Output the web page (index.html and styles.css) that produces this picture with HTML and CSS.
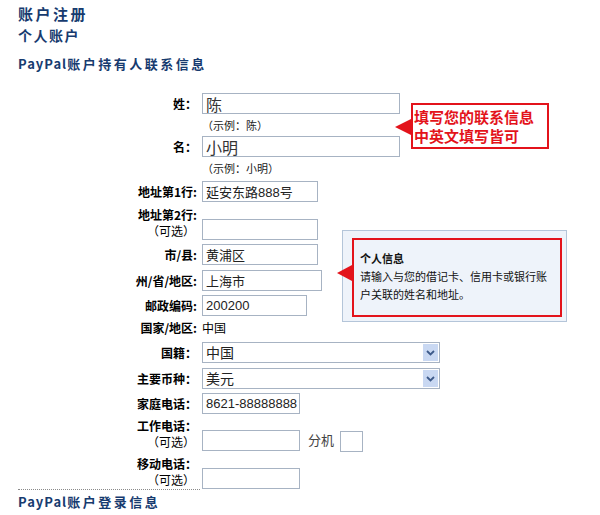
FILE: index.html
```html
<!DOCTYPE html>
<html lang="zh-CN">
<head>
<meta charset="utf-8">
<title>账户注册</title>
<link rel="stylesheet" href="styles.css">
</head>
<body>
<div class="page">
  <div class="head">
    <h1 class="title">账户注册</h1>
    <h2 class="subtitle">个人账户</h2>
    <h3 class="section"><span class="latin">PayPal</span>账户持有人联系信息</h3>
  </div>

  <div class="form">
    <div class="row">
      <div class="lbl">姓：</div>
      <div class="field">
        <input class="inp w-name big" value="陈">
        <div class="hint">（示例：陈）</div>
      </div>
    </div>
    <div class="row mt2">
      <div class="lbl">名：</div>
      <div class="field">
        <input class="inp w-name big" value="小明">
        <div class="hint hint2">（示例：小明）</div>
      </div>
    </div>
    <div class="row mt4">
      <div class="lbl">地址第1行:</div>
      <div class="field"><input class="inp w-addr" value="延安东路888号"></div>
    </div>
    <div class="row mt5">
      <div class="lbl two"><span class="l1">地址第2行:</span><span class="opt">（可选）</span></div>
      <div class="field low"><input class="inp w-addr" value=""></div>
    </div>
    <div class="row mt4">
      <div class="lbl">市/县:</div>
      <div class="field"><input class="inp w-addr" value="黄浦区"></div>
    </div>
    <div class="row mt5">
      <div class="lbl">州/省/地区:</div>
      <div class="field"><input class="inp w-state" value="上海市"></div>
    </div>
    <div class="row mt4">
      <div class="lbl">邮政编码:</div>
      <div class="field"><input class="inp w-zip" value="200200"></div>
    </div>
    <div class="row mt4 country">
      <div class="lbl">国家/地区:</div>
      <div class="field"><div class="static">中国</div></div>
    </div>
    <div class="row mt6">
      <div class="lbl">国籍：</div>
      <div class="field">
        <div class="select">
          <select class="sel"><option>中国</option></select>
          <span class="sel-btn"><svg width="9" height="6" viewBox="0 0 9 6"><path d="M1 1 L4.5 4.5 L8 1" fill="none" stroke="#3d5a8a" stroke-width="1.8"/></svg></span>
        </div>
      </div>
    </div>
    <div class="row mt5">
      <div class="lbl">主要币种：</div>
      <div class="field">
        <div class="select">
          <select class="sel"><option>美元</option></select>
          <span class="sel-btn"><svg width="9" height="6" viewBox="0 0 9 6"><path d="M1 1 L4.5 4.5 L8 1" fill="none" stroke="#3d5a8a" stroke-width="1.8"/></svg></span>
        </div>
      </div>
    </div>
    <div class="row mt4">
      <div class="lbl">家庭电话：</div>
      <div class="field"><div class="inp w-phone caretbox">8621-88888888<span class="caret"></span></div></div>
    </div>
    <div class="row mt4">
      <div class="lbl two"><span class="l1">工作电话：</span><span class="opt">（可选）</span></div>
      <div class="field low inline">
        <input class="inp w-phone" value="">
        <span class="ext">分机</span>
        <input class="inp w-ext" value="">
      </div>
    </div>
    <div class="row mt4">
      <div class="lbl two"><span class="l1">移动电话：</span><span class="opt">（可选）</span></div>
      <div class="field low"><input class="inp w-phone" value=""></div>
    </div>
  </div>

  <div class="divider"></div>
  <h3 class="section foot"><span class="latin">PayPal</span>账户登录信息</h3>

  <div class="callout c1">填写您的联系信息<br>中英文填写皆可</div>

  <div class="infobox">
    <div class="infobox-in">
      <div class="info-title">个人信息</div>
      <div class="info-text">请输入与您的借记卡、信用卡或银行账<br>户关联的姓名和地址。</div>
    </div>
  </div>
</div>
</body>
</html>
```

FILE: styles.css
```css
body {
  margin: 0;
  background: #ffffff;
  font-family: "Noto Sans CJK SC", "Noto Sans", sans-serif;
  color: #000;
}

.page {
  position: relative;
  width: 600px;
  height: 515px;
  overflow: hidden;
}

.head {
  padding: 4px 0 0 18px;
}

.title {
  margin: 0;
  font-size: 15px;
  line-height: 20px;
  letter-spacing: 2.5px;
  font-weight: 700;
  color: #173b6f;
}

.subtitle {
  margin: 2px 0 0;
  font-size: 14px;
  line-height: 18px;
  letter-spacing: 1.5px;
  font-weight: 700;
  color: #173b6f;
}

.section {
  margin: 12px 0 0;
  font-size: 13px;
  line-height: 16px;
  letter-spacing: 2.5px;
  font-weight: 700;
  color: #173b6f;
}

.section .latin {
  letter-spacing: 1px;
}

.section.foot {
  margin: 4px 0 0 18px;
}

.form {
  margin-top: 21px;
}

.row {
  display: flex;
  align-items: flex-start;
}

.mt2 { margin-top: 2px; }
.mt4 { margin-top: 4px; }
.mt5 { margin-top: 5px; }
.mt6 { margin-top: 6px; }

.lbl {
  flex: none;
  width: 197px;
  text-align: right;
  font-size: 12px;
  line-height: 21px;
  font-weight: 700;
  white-space: nowrap;
}

.lbl.two {
  line-height: 16px;
}

.lbl.two span {
  display: block;
}

.lbl .opt {
  font-weight: 400;
  padding-right: 2px;
}

.field {
  margin-left: 5px;
}

.field.low {
  margin-top: 12px;
}

.field.inline {
  display: flex;
  align-items: flex-start;
}

.inp {
  display: block;
  box-sizing: border-box;
  height: 21px;
  margin: 0;
  padding: 0 3px;
  border: 1px solid #a7b3c3;
  background: #fff;
  font-family: "Liberation Sans", "Noto Sans CJK SC", sans-serif;
  font-size: 13px;
  line-height: 19px;
  color: #222;
  outline: none;
}

.inp.big {
  font-size: 16px;
  color: #333;
}

.w-name { width: 198px; }
.w-addr { width: 116px; }
.w-state { width: 120px; }
.w-zip { width: 105px; }
.w-phone { width: 98px; }
.w-ext { width: 23px; margin-top: 1px; }

.caretbox {
  display: flex;
  align-items: center;
  white-space: nowrap;
}

.caret {
  display: inline-block;
  width: 1px;
  height: 15px;
  background: #000;
  margin-left: 1px;
}

.hint {
  margin-top: 3px;
  font-size: 11px;
  line-height: 17px;
  color: #222;
}

.hint2 {
  margin-top: 3px;
}

.country .lbl {
  line-height: 16px;
}

.static {
  font-size: 12px;
  line-height: 16px;
}

.ext {
  margin: 0 6px 0 8px;
  font-size: 13px;
  color: #444;
  line-height: 19px;
}

.select {
  position: relative;
  box-sizing: border-box;
  width: 238px;
  height: 21px;
  border: 1px solid #a7b3c3;
  background: #fff;
}

.sel {
  appearance: none;
  -webkit-appearance: none;
  display: block;
  width: 100%;
  height: 19px;
  margin: 0;
  padding: 0 3px;
  border: none;
  background: transparent;
  font-family: "Noto Sans CJK SC", sans-serif;
  font-size: 14px;
  line-height: 19px;
  color: #222;
  outline: none;
}

.sel-btn {
  position: absolute;
  right: 1px;
  top: 1px;
  width: 15px;
  height: 17px;
  background: #c9d8f2;
  display: flex;
  align-items: center;
  justify-content: center;
}

.divider {
  margin-left: 18px;
  width: 182px;
  border-top: 1px dotted #8a8a8a;
}

.callout {
  position: absolute;
  box-sizing: border-box;
  background: #fff;
  border: 2px solid #e3131b;
}

.c1 {
  left: 411px;
  top: 103px;
  width: 138px;
  height: 46px;
  padding: 2px 0 0 1px;
  font-size: 15px;
  line-height: 19px;
  font-weight: 700;
  color: #e3131b;
  white-space: nowrap;
}

.c1::before {
  content: "";
  position: absolute;
  left: -18px;
  top: 14px;
  border-right: 16px solid #e3131b;
  border-top: 8px solid transparent;
  border-bottom: 8px solid transparent;
}

.infobox {
  position: absolute;
  left: 342px;
  top: 230px;
  width: 225px;
  height: 92px;
  box-sizing: border-box;
  padding: 7px 4px 4px 9px;
  background: #eef3fa;
  border: 1px solid #b4c5d9;
}

.infobox-in {
  position: relative;
  box-sizing: border-box;
  width: 210px;
  height: 79px;
  padding: 9px 4px 0 6px;
  border: 2px solid #e3131b;
  font-size: 11px;
  line-height: 18px;
  color: #111;
}

.infobox-in::before {
  content: "";
  position: absolute;
  left: -17px;
  top: 25px;
  border-right: 15px solid #e3131b;
  border-top: 8px solid transparent;
  border-bottom: 8px solid transparent;
}

.info-title {
  font-weight: 700;
}

.info-text {
  white-space: nowrap;
}
```
